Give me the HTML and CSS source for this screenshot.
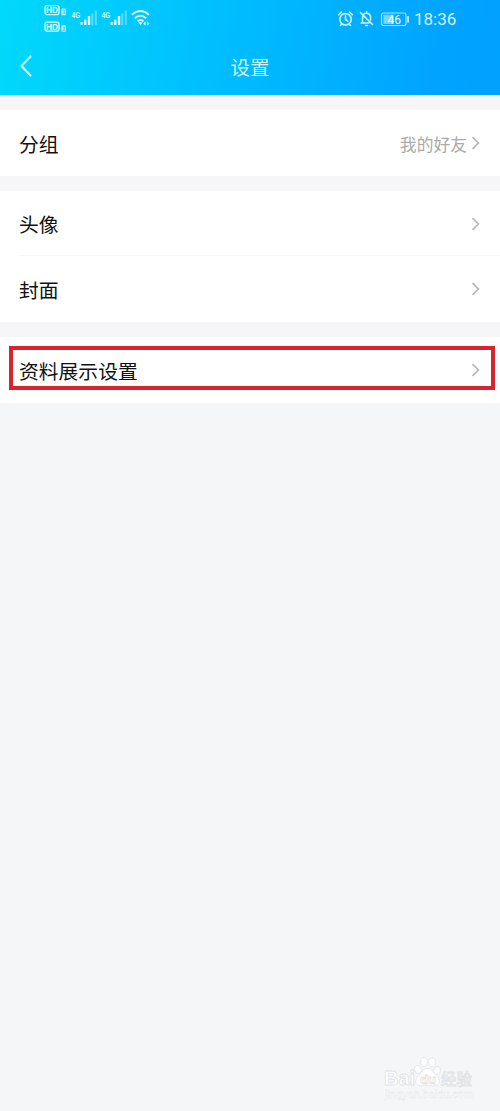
FILE: index.html
```html
<!DOCTYPE html>
<html lang="zh-CN">
<head>
<meta charset="utf-8">
<title>设置</title>
<link rel="stylesheet" href="styles.css">
</head>
<body>
<header class="header">
  <div class="status">
    <svg class="signals" width="110" height="32" viewBox="0 0 110 32">
      <g fill="none" stroke="#c9fbff" stroke-width="1.400">
        <rect x="1" y="5.600" width="14" height="9" rx="2"/>
        <rect x="1" y="22.200" width="14" height="9" rx="2"/>
      </g>
      <g class="tiny" fill="#e4fdff">
        <text x="2" y="13.400" textLength="12" lengthAdjust="spacingAndGlyphs">HD</text>
        <text x="2" y="30" textLength="12" lengthAdjust="spacingAndGlyphs">HD</text>
      </g>
      <g fill="#b9f6ff"><rect x="17.400" y="8.400" width="4.600" height="6.800" rx="1"/><rect x="17.400" y="25" width="4.600" height="6.800" rx="1"/></g>
      <g class="micro" fill="#38bfe8"><text x="18.200" y="14.200">1</text><text x="18.200" y="30.800">2</text></g>
      <g class="net" fill="#d8fcff">
        <text x="27.800" y="17.500" textLength="8.500" lengthAdjust="spacingAndGlyphs">4G</text>
        <text x="57.800" y="17.500" textLength="8.500" lengthAdjust="spacingAndGlyphs">4G</text>
      </g>
      <g fill="#d8fcff">
        <path d="M36.500 22h2.200v3h-2.200zM40 19.500h2.400V25H40zM43.800 16h2.400v9h-2.400z"/>
        <path d="M66.500 22h2.200v3h-2.200zM70 19.500h2.400V25H70zM73.800 16h2.400v9h-2.400z"/>
        <path opacity=".4" d="M47.300 13.500h2V25h-2zM50.800 10.500h2V25h-2zM77.300 13.500h2V25h-2zM80.800 10.500h2V25h-2z"/>
      </g>
      <g fill="none" stroke="#d8fcff" stroke-width="2">
        <path d="M87.800 14.700Q96.500 7.200 105 14.700M90.800 18.200Q96.500 13.200 102.200 18.200M93.500 21.300Q96.500 18.800 99.500 21.300"/>
      </g>
      <path fill="#d8fcff" d="M94.300 22.300h4.400l-2.200 3zM99.300 23.500l2.200-2.200v4.400zM105.500 23.500l-2.500-2.200v4.400z"/>
    </svg>
    <div class="status-right">
      <svg width="72" height="20" viewBox="0 0 72 20">
        <g fill="none" stroke="#caf5ff" stroke-width="1.600" stroke-linecap="round" stroke-linejoin="round">
          <circle cx="8.500" cy="10.300" r="5.700"/>
          <path d="M8.500 7v3.500l2.200 1.700M1.700 5.600l2.700-2.500M15.300 5.600l-2.700-2.500M4.800 15l-1.300 1.500M12.200 15l1.300 1.500"/>
          <path d="M25.500 13.800V9Q25.500 4.300 29.600 4.300Q33.600 4.300 33.600 9v2M24 14h8M29.600 4.300V2.700M23.500 3.600L35.500 15.500M28.600 16.500h2"/>
        </g>
        <rect x="44.500" y="4" width="24.500" height="12.500" rx="2" fill="none" stroke="#a9e5f7" stroke-width="1.100"/>
        <rect x="46.300" y="5.700" width="10.500" height="9.200" fill="#7fd3f4"/>
        <rect x="70.200" y="7" width="1.700" height="6.500" rx=".6" fill="#c4f2ff"/>
        <text class="level" x="50.500" y="14.700" fill="#eaffff">46</text>
      </svg>
      <span class="clock">18:36</span>
    </div>
  </div>
  <div class="titlebar">
    <svg class="back" width="14" height="24" viewBox="0 0 14 24"><path d="M11.500 2.500L2.500 12l9 9.500"/></svg>
    <h1 class="title">设置</h1>
  </div>
</header>
<main class="list">
  <section class="group">
    <div class="row"><span>分组</span><span class="value">我的好友</span><svg class="chevron" width="9" height="14" viewBox="0 0 9 14"><path d="M1.500 1.200L7.400 7l-5.900 5.800"/></svg></div>
  </section>
  <section class="group">
    <div class="row divided"><span>头像</span><svg class="chevron" width="9" height="14" viewBox="0 0 9 14"><path d="M1.500 1.200L7.400 7l-5.900 5.800"/></svg></div>
    <div class="row"><span>封面</span><svg class="chevron" width="9" height="14" viewBox="0 0 9 14"><path d="M1.500 1.200L7.400 7l-5.900 5.800"/></svg></div>
  </section>
  <section class="group marked">
    <div class="row"><span>资料展示设置</span><svg class="chevron" width="9" height="14" viewBox="0 0 9 14"><path d="M1.500 1.200L7.400 7l-5.900 5.800"/></svg></div>
    <div class="highlight"></div>
  </section>
</main>
<svg class="watermark" width="100" height="50" viewBox="0 0 100 50">
  <g fill="#fff" stroke="#e0e2e5" stroke-width=".8">
    <text class="brand" x="3" y="31" textLength="31" lengthAdjust="spacingAndGlyphs">Bai</text>
    <ellipse cx="37" cy="15.500" rx="3.200" ry="4.300" transform="rotate(-15 37 15.500)"/>
    <ellipse cx="43" cy="8" rx="3.300" ry="4.600"/>
    <ellipse cx="51" cy="8.500" rx="3.300" ry="4.600"/>
    <ellipse cx="56" cy="16.500" rx="3.200" ry="4.300" transform="rotate(15 56 16.500)"/>
    <path d="M46.500 14.500c-5 0-5.500 4.500-9 7.200c-4.500 3.600-3.500 10 2.500 10h13c6 0 7-6.400 2.500-10c-3.500-2.700-4-7.200-9-7.200z"/>
    <text class="du" x="39" y="29.500">du</text>
    <text class="jingyan" x="60" y="30.500" textLength="31" lengthAdjust="spacingAndGlyphs">经验</text>
    <text class="site" x="4" y="44" textLength="88" lengthAdjust="spacingAndGlyphs">jingyan.baidu.com</text>
  </g>
</svg>
</body>
</html>
```
FILE: styles.css
```css
* { box-sizing: border-box; }
body {
  margin: 0;
  position: relative;
  min-height: 1111px;
  background: #f5f6f8;
  color: #111;
  font-family: "Noto Sans CJK SC", sans-serif;
}
.header {
  height: 95px;
  background: linear-gradient(100deg, #00d9fb 0%, #00bfff 42%, #00a3ff 88%, #00a1ff 100%);
}
.status {
  display: flex;
  justify-content: space-between;
  height: 38px;
  padding: 0 44px;
}
.tiny { font: bold 8.5px "Liberation Sans", sans-serif; }
.micro { font: bold 6px "Liberation Sans", sans-serif; }
.net { font: bold 9.5px "Liberation Sans", sans-serif; }
.level { font: 12px Roboto, sans-serif; }
.status-right {
  display: flex;
  align-items: center;
  gap: 5px;
}
.status-right svg { margin-top: -1px; }
.clock {
  color: #d5f5ff;
  font: 17px/20px Roboto, sans-serif;
  width: 42px;
  white-space: nowrap;
}
.titlebar {
  display: grid;
  grid-template-columns: 40px 1fr 40px;
  align-items: center;
  height: 57px;
}
.back {
  margin-left: 19px;
  margin-top: -2px;
  fill: none;
  stroke: #c9fbff;
  stroke-width: 2.2;
  stroke-linecap: round;
}
.title {
  margin: 0;
  color: #d0f5ff;
  font-size: 19.5px;
  font-weight: 400;
  line-height: 28px;
  text-align: center;
}
.list {
  display: flex;
  flex-direction: column;
  gap: 15px;
  padding-top: 15px;
  background: #f6f5f8;
}
.group { background: #fff; }
.row {
  display: flex;
  align-items: center;
  height: 66px;
  padding: 0 20px 0 19px;
  font-size: 19.8px;
  line-height: 30px;
}
.row span { padding-top: 1px; }
.divided {
  height: 65px;
  background: linear-gradient(#f7f7f9, #f7f7f9) 19px 100% / 100% 1px no-repeat;
}
.value {
  margin-left: auto;
  color: #aaa;
  font-size: 16.8px;
}
.chevron {
  margin-left: auto;
  fill: none;
  stroke: #b8b8b8;
  stroke-width: 1.7;
}
.value + .chevron { margin-left: 4px; }
.marked { position: relative; }
.highlight {
  position: absolute;
  top: 9px;
  left: 9px;
  right: 5px;
  height: 44px;
  border: 4px solid #d9232e;
}
.watermark {
  position: absolute;
  left: 381px;
  top: 1054px;
}
.brand { font: bold 21px "Liberation Sans", sans-serif; }
.du { font: bold 13px "Liberation Sans", sans-serif; }
.jingyan { font: 16px "Noto Sans CJK SC", sans-serif; }
.site { font: 11px "Liberation Sans", sans-serif; stroke-width: .3; }
```
